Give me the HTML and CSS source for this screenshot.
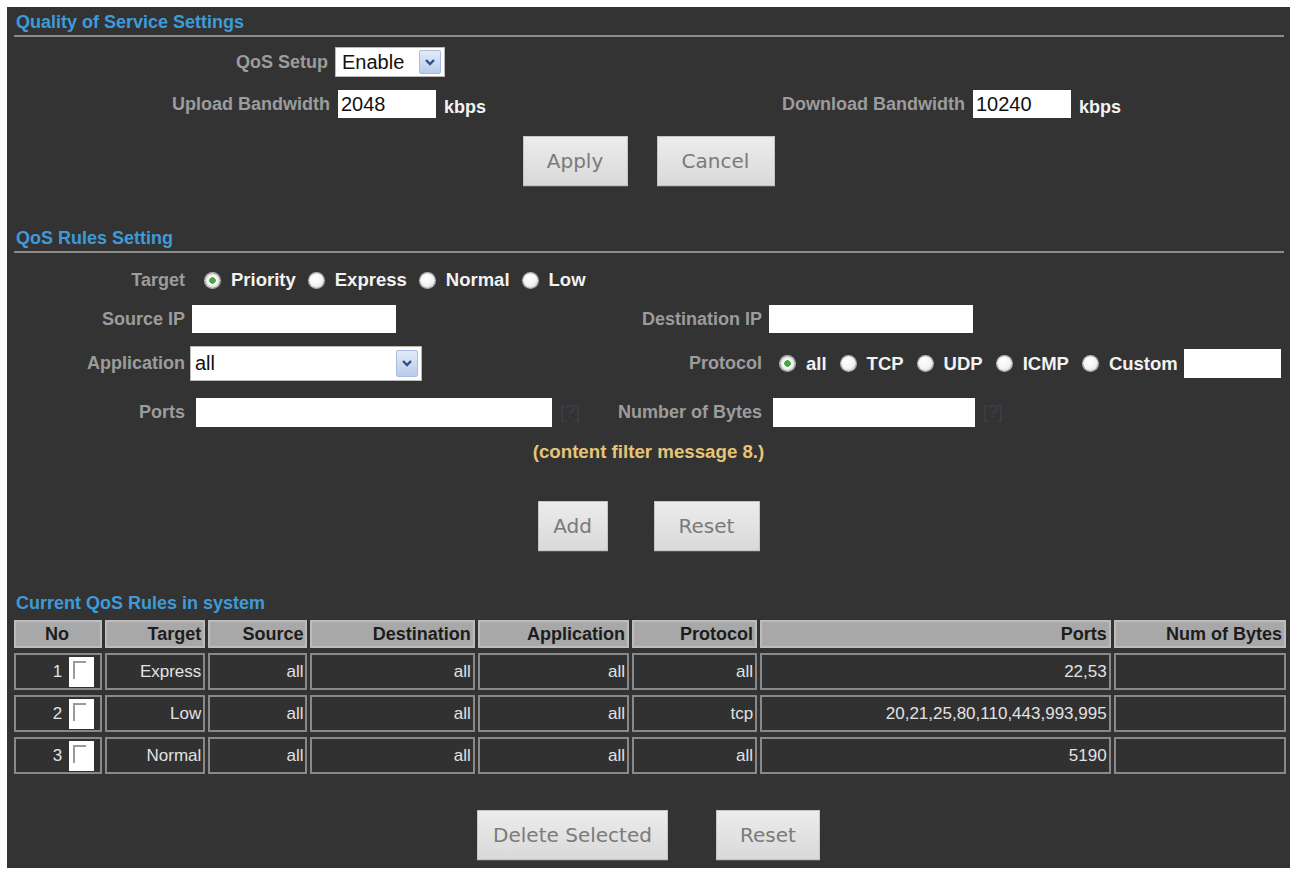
FILE: index.html
```html
<!DOCTYPE html>
<html lang="en">
<head>
<meta charset="utf-8">
<title>Quality of Service Settings</title>
<link rel="stylesheet" href="styles.css">
</head>
<body>
<div class="panel">
  <div class="section-title">Quality of Service Settings</div>

  <div class="row top r-setup">
    <span class="lbl">QoS Setup</span>
    <div class="field">
      <div class="select sel-setup"><span class="sel-text">Enable</span><span class="arrow"><svg width="12" height="9" viewBox="0 0 12 9"><path d="M2 2 L6 6 L10 2" fill="none" stroke="#2f4f8f" stroke-width="2.4"/></svg></span></div>
    </div>
  </div>

  <div class="row top r-bw">
    <span class="lbl">Upload Bandwidth</span>
    <div class="field"><input class="input in-bw" type="text" value="2048"><span class="unit">kbps</span></div>
    <span class="lbl">Download Bandwidth</span>
    <div class="field"><input class="input in-bw" type="text" value="10240"><span class="unit">kbps</span></div>
  </div>

  <div class="btns btns-apply">
    <button class="btn b-apply">Apply</button>
    <button class="btn b-cancel">Cancel</button>
  </div>

  <div class="section-title st2">QoS Rules Setting</div>

  <div class="row rules r-target">
    <span class="lbl">Target</span>
    <div class="field radios target-radios">
      <span class="radio on"></span><span class="rtext">Priority</span>
      <span class="radio"></span><span class="rtext">Express</span>
      <span class="radio"></span><span class="rtext">Normal</span>
      <span class="radio"></span><span class="rtext">Low</span>
    </div>
  </div>

  <div class="row rules r-ip">
    <span class="lbl">Source IP</span>
    <div class="field"><input class="input in-ip" type="text" value=""></div>
    <span class="lbl">Destination IP</span>
    <div class="field"><input class="input in-ip" type="text" value=""></div>
  </div>

  <div class="row rules r-app">
    <span class="lbl">Application</span>
    <div class="field">
      <div class="select sel-app"><span class="sel-text">all</span><span class="arrow"><svg width="12" height="9" viewBox="0 0 12 9"><path d="M2 2 L6 6 L10 2" fill="none" stroke="#2f4f8f" stroke-width="2.4"/></svg></span></div>
    </div>
    <span class="lbl">Protocol</span>
    <div class="field radios proto-radios">
      <span class="radio on"></span><span class="rtext">all</span>
      <span class="radio"></span><span class="rtext">TCP</span>
      <span class="radio"></span><span class="rtext">UDP</span>
      <span class="radio"></span><span class="rtext">ICMP</span>
      <span class="radio"></span><span class="rtext">Custom</span>
      <input class="input in-custom" type="text" value="">
    </div>
  </div>

  <div class="row rules r-ports">
    <span class="lbl">Ports</span>
    <div class="field"><input class="input in-ports" type="text" value=""><span class="help">[?]</span></div>
    <span class="lbl">Number of Bytes</span>
    <div class="field"><input class="input in-bytes" type="text" value=""><span class="help">[?]</span></div>
  </div>

  <div class="message">(content filter message 8.)</div>

  <div class="btns btns-add">
    <button class="btn b-add">Add</button>
    <button class="btn b-reset">Reset</button>
  </div>

  <div class="section-title st3">Current QoS Rules in system</div>

  <table class="rules-table">
    <colgroup>
      <col class="w-no"><col class="w-target"><col class="w-source"><col class="w-dest">
      <col class="w-app"><col class="w-proto"><col class="w-ports"><col class="w-bytes">
    </colgroup>
    <thead>
      <tr>
        <th class="th-no">No</th><th>Target</th><th>Source</th><th>Destination</th>
        <th>Application</th><th>Protocol</th><th>Ports</th><th>Num of Bytes</th>
      </tr>
    </thead>
    <tbody>
      <tr>
        <td class="td-no"><span class="num">1</span><span class="cb"></span></td>
        <td>Express</td><td>all</td><td>all</td><td>all</td><td>all</td><td>22,53</td><td></td>
      </tr>
      <tr>
        <td class="td-no"><span class="num">2</span><span class="cb"></span></td>
        <td>Low</td><td>all</td><td>all</td><td>all</td><td>tcp</td><td>20,21,25,80,110,443,993,995</td><td></td>
      </tr>
      <tr>
        <td class="td-no"><span class="num">3</span><span class="cb"></span></td>
        <td>Normal</td><td>all</td><td>all</td><td>all</td><td>all</td><td>5190</td><td></td>
      </tr>
    </tbody>
  </table>

  <div class="btns btns-del">
    <button class="btn b-del">Delete Selected</button>
    <button class="btn b-reset2">Reset</button>
  </div>
</div>
</body>
</html>
```

FILE: styles.css
```css
* { box-sizing: border-box; }

html, body {
  margin: 0;
  padding: 0;
  background: #ffffff;
}

body {
  font-family: "Liberation Sans", Arial, sans-serif;
}

.panel {
  margin: 7px 6px 3px 7px;
  background: #333333;
  padding-bottom: 8px;
  overflow: hidden;
}

/* section headings */
.section-title {
  margin: 0 6px 0 7px;
  padding: 3px 0 0 2px;
  line-height: 25px;
  font-size: 18px;
  font-weight: bold;
  color: #3f9ad8;
  border-bottom: 2px solid #8c8c8c;
}

.st2 { margin-top: 37px; }

.st3 {
  margin-top: 40px;
  padding-top: 0;
  line-height: 24px;
  border-bottom: none;
}

/* form rows */
.row {
  display: grid;
  align-items: center;
}

.row.top { grid-template-columns: 331px 300px 335px 1fr; }
.row.rules { grid-template-columns: 185px 408px 169px 1fr; }

.lbl {
  text-align: right;
  padding-right: 8px;
  font-size: 18px;
  font-weight: bold;
  color: #9c9c9c;
  white-space: nowrap;
}

.row.rules .lbl { padding-right: 7px; }

.field {
  display: flex;
  align-items: center;
}

.r-setup { margin-top: 10px; height: 30px; }
.r-setup .lbl { padding-right: 10px; }
.r-setup .field { margin-left: -3px; }

.r-bw { margin-top: 13px; height: 28px; }

.r-target { margin-top: 15px; height: 24px; }
.r-ip { margin-top: 13px; height: 28px; }
.r-app { margin-top: 13px; height: 35px; }
.r-ports { margin-top: 17px; height: 29px; }

/* inputs */
.input {
  border: none;
  outline: none;
  background: #ffffff;
  font-family: "Liberation Sans", Arial, sans-serif;
  font-size: 20px;
  color: #111111;
  padding: 0 3px;
  margin: 0;
}

.in-bw { width: 98px; height: 28px; }
.in-ip { width: 204px; height: 28px; }
.in-ports { width: 356px; height: 29px; margin-left: 4px; }
.in-bytes { width: 202px; height: 29px; margin-left: 4px; }
.in-custom { width: 97px; height: 29px; margin-left: 6px; }

.unit {
  margin-left: 8px;
  margin-top: 7px;
  font-size: 18px;
  font-weight: bold;
  color: #f2f2f2;
}

.help {
  margin-left: 8px;
  font-size: 18px;
  color: #394049;
}

/* selects */
.select {
  display: flex;
  align-items: center;
  justify-content: space-between;
  background: #ffffff;
  border: 1px solid #b8b8b8;
  padding: 0 3px 0 6px;
}

.sel-text {
  font-size: 20px;
  color: #111111;
}

.sel-setup { width: 110px; height: 30px; }
.sel-app { width: 232px; height: 35px; margin-left: -2px; padding-left: 4px; }

.arrow {
  display: flex;
  align-items: center;
  justify-content: center;
  width: 22px;
  height: 24px;
  background: linear-gradient(#e3ebf8, #b9cbeb);
  border: 1px solid #a8bbe0;
  border-radius: 2px;
}

.sel-app .arrow { height: 27px; }

/* radios */
.radios { height: 24px; }

.radio {
  width: 15px;
  height: 15px;
  flex: none;
  border-radius: 50%;
  background: radial-gradient(circle at 40% 35%, #ffffff 0, #f4f4f4 50%, #cdcdcd 100%);
  box-shadow: 0 0 0 1px #b0b0b0;
}

.radio.on {
  background: radial-gradient(circle, #48a848 0, #48a848 3px, #ffffff 3.6px, #f4f4f4 5px, #cfcfcf 7.5px);
}

.rtext {
  margin-left: 11px;
  margin-right: 13px;
  font-size: 18.5px;
  font-weight: bold;
  color: #f2f2f2;
}

.target-radios { padding-left: 13px; }
.proto-radios { padding-left: 11px; }
.proto-radios .rtext { margin-right: 14px; }
.proto-radios .rtext:last-of-type { margin-right: 0; }

/* message */
.message {
  margin-top: 15px;
  line-height: 20px;
  text-align: center;
  font-size: 18.7px;
  font-weight: bold;
  color: #e6c578;
}

/* buttons */
.btns {
  display: flex;
  justify-content: center;
}

.btn {
  height: 50px;
  margin: 0;
  padding: 0;
  border: 1px solid #c4c4c4;
  background: linear-gradient(#ececec, #d9d9d9);
  font-family: "DejaVu Sans", Verdana, sans-serif;
  font-size: 20px;
  color: #7a7a7a;
  box-shadow: 0 1px 0 #555555;
}

.btns-apply { margin-top: 18px; gap: 29px; }
.b-apply { width: 105px; }
.b-cancel { width: 118px; }

.btns-add { margin-top: 39px; gap: 46px; }
.b-add { width: 70px; }
.b-reset { width: 106px; }

.btns-del { margin-top: 31px; gap: 48px; }
.b-del { width: 191px; }
.b-reset2 { width: 104px; }

/* table */
.rules-table {
  margin-left: 4px;
  width: 1278px;
  table-layout: fixed;
  border-collapse: separate;
  border-spacing: 3px 5px;
}

.w-no { width: 88px; }
.w-target { width: 100px; }
.w-source { width: 99px; }
.w-dest { width: 164px; }
.w-app { width: 151px; }
.w-proto { width: 125px; }
.w-ports { width: 350px; }
.w-bytes { width: 172px; }

.rules-table th {
  height: 28px;
  padding: 0 2px 0 0;
  background: #a8a8a8;
  border: 2px solid #bcbcbc;
  text-align: right;
  font-size: 18px;
  font-weight: bold;
  color: #1c1c1c;
  white-space: nowrap;
}

.rules-table th.th-no { text-align: center; }

.rules-table td {
  height: 37px;
  padding: 0 2px 0 0;
  background: #313131;
  border: 2px solid #898989;
  text-align: right;
  font-size: 17px;
  color: #e2e2e2;
  white-space: nowrap;
}

.rules-table td.td-no {
  padding-right: 6px;
}

.td-no .num {
  vertical-align: middle;
  font-size: 17px;
}

.cb {
  position: relative;
  display: inline-block;
  vertical-align: middle;
  width: 25px;
  height: 30px;
  margin-left: 7px;
  background: #ffffff;
}

.cb::before {
  content: "";
  position: absolute;
  left: 4px;
  top: 4px;
  width: 11px;
  height: 16px;
  border-top: 2px solid #9a9a9a;
  border-left: 2px solid #9a9a9a;
}
```
